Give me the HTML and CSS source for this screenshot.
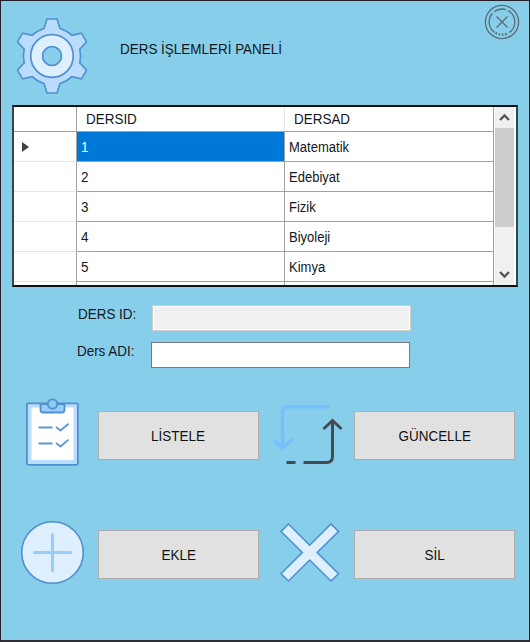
FILE: index.html
```html
<!DOCTYPE html>
<html lang="tr">
<head>
<meta charset="utf-8">
<title>Ders İşlemleri Paneli</title>
<link rel="stylesheet" href="styles.css">
</head>
<body>
<main class="window">
  <header class="header">
    <svg class="gear" viewBox="-38 -40 76 80">
      <path class="gear-body" d="M-8-27.5L-5-37H5L8-27.5A29 29 0 0 1 19.8-20.7L29.5-22.8L34.5-14.2L27.8-6.8A29 29 0 0 1 27.8 6.8L34.5 14.2L29.5 22.8L19.8 20.7A29 29 0 0 1 8 27.5L5 37H-5L-8 27.5A29 29 0 0 1-19.8 20.7L-29.5 22.8L-34.5 14.2L-27.8 6.8A29 29 0 0 1-27.8-6.8L-34.5-14.2L-29.5-22.8L-19.8-20.7A29 29 0 0 1-8-27.5Z"/>
      <circle class="gear-ring" r="21.3"/>
      <circle class="gear-hole" r="9.5"/>
    </svg>
    <h1 class="title"><span class="t">DERS İŞLEMLERİ PANELİ</span></h1>
    <svg class="close" viewBox="-18 -18 36 36">
      <circle r="16.6"/>
      <path d="M-7.5 10.4A12.9 12.9 0 0 1-9.5-8.7M-7.8-10.3A12.9 12.9 0 0 1 4-12.3M6-11.4A12.9 12.9 0 0 1 7.5 10.4"/>
      <path class="close-dots" d="M-6.5 11Q0 14.2 6.5 11"/>
      <path d="M-5.5-5.5L5.5 5.5M5.5-5.5L-5.5 5.5"/>
    </svg>
  </header>

  <section class="grid">
    <div class="rows">
      <div class="row head"><div></div><div><span class="t">DERSID</span></div><div><span class="t">DERSAD</span></div></div>
      <div class="row"><div><i class="marker"></i></div><div class="selected"><span class="t">1</span></div><div><span class="t low">Matematik</span></div></div>
      <div class="row"><div></div><div><span class="t">2</span></div><div><span class="t low">Edebiyat</span></div></div>
      <div class="row"><div></div><div><span class="t">3</span></div><div><span class="t low">Fizik</span></div></div>
      <div class="row"><div></div><div><span class="t">4</span></div><div><span class="t low">Biyoleji</span></div></div>
      <div class="row"><div></div><div><span class="t">5</span></div><div><span class="t low">Kimya</span></div></div>
      <div class="row"><div></div><div></div><div></div></div>
    </div>
    <div class="scrollbar">
      <svg viewBox="0 0 19 21"><path d="M5 13L9.5 8.5L14 13"/></svg>
      <div class="thumb"></div>
      <svg class="down" viewBox="0 0 19 21"><path d="M5 8L9.5 12.5L14 8"/></svg>
    </div>
  </section>

  <section class="form">
    <label class="field first"><span class="label"><span class="t">DERS ID:</span></span><input class="input" disabled></label>
    <label class="field"><span class="label"><span class="t mixed">Ders ADI:</span></span><input class="input"></label>
  </section>

  <section class="actions">
    <svg class="icon" viewBox="0 0 76 76">
      <rect x="7.9" y="8.3" width="51" height="61.5" rx="1.5" fill="#b9dcff" stroke="#508fd0" stroke-width="1.8"/>
      <path d="M12.5 12.5H54.5V65H12.5Z" fill="#fff"/>
      <path d="M21.5 9V15Q21.5 17.5 24 17.5H43Q45.5 17.5 45.5 15V9Z" fill="#98ccfb" stroke="#508fd0" stroke-width="1.8"/>
      <circle cx="33.5" cy="9" r="4.7" fill="#87ceeb" stroke="#508fd0" stroke-width="1.8"/>
      <path d="M19.5 32.5H33.5M19.5 48.5H33.5M37 32L41.5 35.5L49.5 28.8M37 48L41.5 51.5L49.5 44.6" fill="none" stroke="#5b99d5" stroke-width="1.9"/>
    </svg>
    <button class="button"><span class="t">LİSTELE</span></button>
    <svg class="icon" viewBox="0 0 76 76">
      <path d="M54 11.7H14.5Q8.5 11.7 8.5 17.7V53M0 45L8.5 53L17.5 45" fill="none" stroke="#74c0fd" stroke-width="3.4" stroke-linecap="round" stroke-linejoin="round"/>
      <path d="M12.5 67.5H21.5M29.5 67.5H52.5Q58.500 67.500 58.500 61.500V26M49.500 34L58.500 25.500L67.500 34" fill="none" stroke="#464b52" stroke-width="3"/>
    </svg>
    <button class="button"><span class="t">GÜNCELLE</span></button>
    <svg class="icon lower" viewBox="0 0 76 76">
      <circle cx="33.5" cy="36.5" r="30.8" fill="#deefff" stroke="#4f90d1" stroke-width="1.6"/>
      <path d="M33.5 18.5V54.5M15.5 36.5H51.5" stroke="#98ccfd" stroke-width="3" stroke-linecap="round"/>
    </svg>
    <button class="button"><span class="t">EKLE</span></button>
    <svg class="icon lower" viewBox="0 0 76 76">
      <path d="M14.5 8L35.7 29.2L57 8L64.5 15.5L43.2 36.5L64.5 57.7L57 65L35.7 44L14.5 65L7 57.7L28.3 36.5L7 15.5Z" fill="#deefff" stroke="#4f90d1" stroke-width="1.6"/>
    </svg>
    <button class="button"><span class="t">SİL</span></button>
  </section>
</main>
</body>
</html>
```
FILE: styles.css
```css
* { box-sizing: border-box; }

body {
  margin: 0;
  font: 15.5px/20px "Liberation Sans", Arial, sans-serif;
  color: #111820;
}

.window {
  width: 530px;
  height: 642px;
  overflow: hidden;
  background: #87ceeb;
  border: 1px solid #241f29;
  border-bottom: 2px solid #342c36;
}

.t {
  display: inline-block;
  white-space: nowrap;
  transform: scaleX(.868);
  transform-origin: left center;
}
.low { transform: scaleX(.84); }
.mixed { transform: scaleX(.865); }

.header {
  display: flex;
  align-items: flex-start;
  height: 104px;
  padding-left: 13px;
}
.gear { width: 76px; height: 80px; margin-top: 15px; }
.gear-body { fill: #b9dcff; stroke: #508fd0; stroke-width: 1.6; }
.gear-ring { fill: #deefff; stroke: #508fd0; stroke-width: 1.7; }
.gear-hole { fill: #87ceeb; stroke: #508fd0; stroke-width: 1.7; }
.title {
  flex: 1;
  margin: 38px 0 0 30px;
  font-size: inherit;
  font-weight: normal;
}
.close {
  width: 36px;
  height: 36px;
  margin: 3px 9px 0 0;
  fill: none;
  stroke: #5c6c76;
  stroke-width: 1.3;
}
.close-dots { stroke-width: 2.4; stroke-dasharray: 1.5 1.8; }

.grid {
  display: flex;
  width: 506px;
  height: 182px;
  margin-left: 11px;
  border: 2px solid #111;
  border-right-color: #34444c;
  border-left-color: #34444c;
  background: #fff;
  overflow: hidden;
}
.rows { width: 480px; flex: none; }
.row {
  display: grid;
  grid-template-columns: 63px 208px 209px;
  height: 30px;
}
.row > div {
  display: flex;
  align-items: center;
  padding-left: 4px;
  border-right: 1px solid #a0a0a0;
  border-bottom: 1px solid #a0a0a0;
}
.row > div:first-child { border-bottom-color: #e5e5e5; }
.head { height: 25px; }
.head > div { padding-left: 9px; }
.head > div:nth-child(2) { border-right-color: #e5e5e5; }
.row.head > div:first-child { border-bottom-color: #a0a0a0; }
.row > .selected { background: #0078d7; color: #fff; }
.marker {
  width: 0;
  height: 0;
  margin-left: 4px;
  border: 5.5px solid transparent;
  border-left: 7px solid #404040;
  border-right: 0;
}

.scrollbar {
  display: flex;
  flex-direction: column;
  width: 19px;
  margin-left: 1px;
  background: #f0f0f0;
}
.scrollbar svg {
  flex: none;
  width: 19px;
  height: 21px;
  fill: none;
  stroke: #555;
  stroke-width: 2.4;
}
.thumb { height: 99px; background: #cdcdcd; }
.scrollbar .down { margin-top: auto; }

.form { height: 116px; padding: 18px 0 0 76px; }
.field { display: flex; height: 37px; }
.label { width: 74px; margin-top: -1px; }
.first .label { padding-left: 1px; }
.first .input { margin-left: 1px; }
.input {
  width: 259px;
  height: 26px;
  padding: 0;
  border: 1px solid #7a7a7a;
  border-radius: 0;
  background: #fff;
}
.input:disabled {
  border-color: #ccc;
  background: #f0f0f0;
  box-shadow: inset 0 0 0 1px #fff;
}

.actions {
  display: grid;
  grid-template-columns: 79px 162px 94px 162px;
  grid-auto-rows: 119px;
  padding-left: 18px;
}
.icon { width: 76px; height: 76px; margin-top: -8px; }
.icon:nth-of-type(even) { margin-left: 14px; }
.lower { margin-top: -6px; }
.button {
  width: 161px;
  height: 49px;
  margin-top: 8px;
  padding: 0;
  border: 1px solid #adadad;
  outline: 0;
  background: #e1e1e1;
  color: #111;
  font: inherit;
}
.button .t { transform-origin: center; }
```
